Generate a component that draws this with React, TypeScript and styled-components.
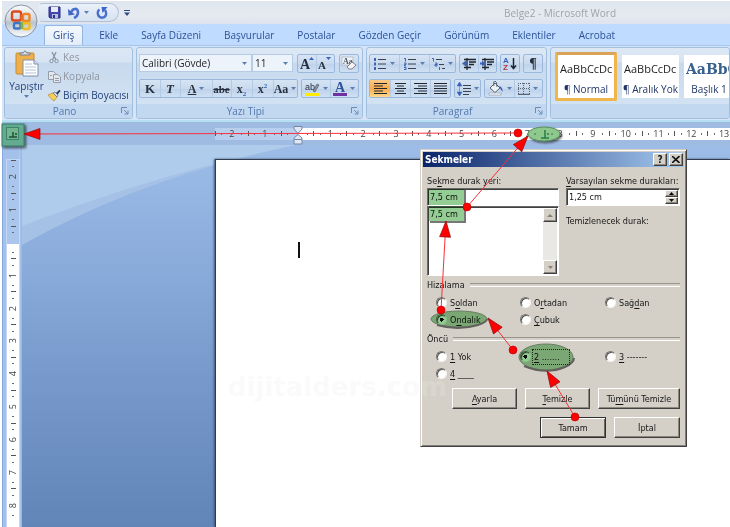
import React from "react";
import styled, { createGlobalStyle, css } from "styled-components";

const GlobalStyle = createGlobalStyle`
  * { box-sizing: border-box; }
  body { margin: 0; background: #fff; overflow: hidden; }
  button, input { font: inherit; color: inherit; }
`;

const ribbonFont = `"Open Sans", "Noto Sans", sans-serif`;
const dialogFont = `"DejaVu Sans Condensed", "DejaVu Sans", sans-serif`;

const Screen = styled.div`
  position: relative;
  display: flex;
  flex-direction: column;
  height: 100vh;
  padding: 1px 0 0 2px;
  overflow: hidden;
  font: 10px/14px ${ribbonFont};
  color: #2a4a86;
`;

/* ---------- window frame ---------- */

const TitleBar = styled.header`
  display: flex;
  align-items: center;
  height: 23px;
  flex: none;
  padding: 0 114px 0 37px;
  background: linear-gradient(#dfe6ee, #e6eaf0 60%, #dde4ee);
`;

const QuickAccess = styled.div`
  display: flex;
  align-items: center;
  gap: 7px;
  width: 80px;
  height: 19px;
  padding: 0 4px 0 8px;
  border: 1px solid #b3c2d6;
  border-left-color: transparent;
  border-radius: 4px 10px 10px 4px;
  background: linear-gradient(#e9f0f8, #d7e3f2);
`;

const PlainButton = styled.button`
  display: flex;
  align-items: center;
  justify-content: center;
  gap: 4px;
  padding: 0;
  border: 0;
  background: none;
  line-height: 12px;
`;

const CustomizeButton = styled(PlainButton)`
  width: 15px;
`;

const WindowTitle = styled.h1`
  margin: 0 0 0 auto;
  font: 10px/14px ${ribbonFont};
  color: #9fa3a9;
`;

const OfficeButton = styled.button`
  position: absolute;
  left: 4px;
  top: 4px;
  width: 34px;
  height: 34px;
  padding: 0;
  border: 0;
  background: none;
`;

const Tabs = styled.nav`
  display: flex;
  flex: none;
  align-items: flex-end;
  height: 22px;
  padding-left: 42px;
  background: #bfdbff;
  border-bottom: 1px solid #a9c6ea;
`;

const Tab = styled.button<{ $active?: boolean }>`
  flex: none;
  height: 20px;
  padding: 0 10px 2px 11px;
  border: 1px solid transparent;
  border-bottom: 0;
  border-radius: 3px 3px 0 0;
  background: none;
  color: #2c5196;
  white-space: nowrap;
  ${(p) =>
    p.$active &&
    css`
      padding: 0 8px 2px;
      margin-right: 4px;
      border-color: #93b5df;
      background: linear-gradient(#f4f8fd, #e2ecf8);
    `}
`;

/* ---------- ribbon ---------- */

const Ribbon = styled.section`
  display: flex;
  flex: none;
  gap: 3px;
  height: 76px;
  padding: 1px 0 1px 2px;
  background: #d5e5f7;
  border-bottom: 2px solid #b5e0f2;
`;

const Group = styled.section<{ $width?: number }>`
  display: flex;
  flex-direction: column;
  flex: ${(p) => (p.$width ? `none` : `1 0 180px`)};
  width: ${(p) => (p.$width ? `${p.$width}px` : `auto`)};
  border: 1px solid #a3bfde;
  border-radius: 3px;
  overflow: hidden;
  background: linear-gradient(#dde8f5 0, #d6e3f3 14px, #c7d9ed 15px, #d5e5f5 100%);
`;

const GroupBody = styled.div`
  display: flex;
  flex: 1;
`;

const GroupLabel = styled.footer`
  display: flex;
  align-items: center;
  height: 14px;
  padding: 0 3px;
  background: #c1d8f0;
  color: #5577ae;
  svg { flex: none; }
  span { flex: 1; text-align: center; }
`;

const PasteButton = styled(PlainButton)`
  flex-direction: column;
  justify-content: flex-start;
  gap: 3px;
  width: 43px;
  padding: 2px 0 0;
  color: #24427c;
`;

const Commands = styled.div`
  display: flex;
  flex-direction: column;
  justify-content: center;
  gap: 5px;
`;

const Command = styled.button<{ $dim?: boolean }>`
  display: flex;
  align-items: center;
  gap: 2px;
  height: 14px;
  padding: 0;
  border: 0;
  background: none;
  white-space: nowrap;
  color: ${(p) => (p.$dim ? "#8f959f" : "#24427c")};
`;

const ToolRows = styled.div`
  display: flex;
  flex-direction: column;
  gap: 6px;
  flex: 1;
  padding: 6px 3px 0 2px;
`;

const ToolRow = styled.div`
  display: flex;
  justify-content: space-between;
  height: 19px;
`;

const ToolSet = styled.div`
  display: flex;
  border: 1px solid #9bb8dc;
  border-radius: 2px;
  background: linear-gradient(#d6e4f4 0, #c9daee 50%, #bdd1ea 51%, #cfe0f3);
`;

const Tool = styled.button<{ $w: number; $on?: boolean }>`
  display: flex;
  align-items: center;
  justify-content: center;
  gap: 3px;
  width: ${(p) => p.$w}px;
  padding: 0;
  border: 0;
  background: ${(p) => (p.$on ? "linear-gradient(#fbc988, #fcab4a 50%, #fdd98c)" : "none")};
  & + & { box-shadow: inset 1px 0 #b3cae6; }
`;

const Combo = styled.label<{ $w: number }>`
  display: flex;
  align-items: center;
  width: ${(p) => p.$w}px;
  height: 18px;
  padding: 0 4px 0 2px;
  border: 1px solid #b5cbe6;
  background: #edf3fa;
  color: #1d1d1d;
  input {
    flex: 1;
    min-width: 0;
    padding: 0;
    border: 0;
    background: none;
    outline: 0;
  }
`;

const Combos = styled.div`
  display: flex;
`;

const Gallery = styled.div`
  display: flex;
  align-items: flex-start;
  gap: 5px;
  padding: 4px 0 0 4px;
`;

const StyleCard = styled.button<{ $active?: boolean; $w: number }>`
  display: flex;
  flex: none;
  flex-direction: column;
  align-items: center;
  justify-content: space-between;
  width: ${(p) => p.$w}px;
  height: 43px;
  margin-top: 3px;
  padding: 7px 2px 2px;
  border: 0;
  overflow: hidden;
  background: #fff;
  color: #1e3566;
  white-space: nowrap;
  ${(p) =>
    p.$active &&
    css`
      height: 49px;
      margin-top: 0;
      padding-top: 7px;
      border: 3px solid #f0b64b;
      border-top-color: #d9a35a;
      border-radius: 2px;
    `}
`;

const Sample = styled.span<{ $heading?: boolean }>`
  width: 100%;
  overflow: hidden;
  text-align: left;
  font-size: 11px;
  color: #1d1d1d;
  ${(p) =>
    p.$heading &&
    css`
      font: bold 14px/14px "DejaVu Serif", serif;
      color: #38618f;
    `}
`;

/* ---------- rulers and document ---------- */

const RulerBar = styled.div`
  display: flex;
  flex: none;
  align-items: center;
  height: 23px;
  padding-left: 213px;
  background: #9fbbe2;
`;

const Strip = styled.div`
  display: flex;
  flex: 1;
  height: 12px;
  min-width: 0;
  overflow: hidden;
  background: linear-gradient(90deg, #b9cfee 83px, #fff 83px);
`;

const Scale = styled.div`
  display: grid;
  flex: none;
  grid-template-columns: repeat(16, 1fr);
  width: 525px;
  align-items: center;
`;

const Centimetre = styled.div`
  display: grid;
  grid-template-columns: 1px 1fr 8px 1fr;
  justify-items: center;
  align-items: center;
  font: 9px/12px ${ribbonFont};
  color: #444;
`;

const Tick = styled.i`
  width: 1px;
  height: 5px;
  background: #555;
`;

const Dot = styled.i`
  width: 1px;
  height: 2px;
  background: #667;
`;

const Workspace = styled.main`
  display: flex;
  flex: 1;
  min-height: 0;
  background: #9dbbe4;
`;

const SideRuler = styled.div`
  flex: none;
  width: 20px;
  padding: 15px 4px 0;
  border-left: 1px solid #86aae0;
  background: linear-gradient(90deg, #a3c1ea 15px, #a9c7ef 17px, #95b4e0);
`;

const SideStrip = styled.div`
  display: flex;
  width: 12px;
  height: 100%;
  overflow: hidden;
  outline: 1px solid #c3d8f4;
  background: linear-gradient(#abc6ec 84px, #fff 84px);
`;

const SideScale = styled.div`
  display: grid;
  flex: none;
  grid-template-rows: repeat(11, 1fr);
  width: 12px;
  height: 361px;
`;

const SideCentimetre = styled.div`
  display: grid;
  grid-template-rows: 1px 1fr 8px 1fr;
  justify-items: center;
  align-items: center;
  font: 9px/12px ${ribbonFont};
  color: #444;
  span { writing-mode: vertical-rl; transform: rotate(180deg); }
  ${Tick} { width: 5px; height: 1px; }
  ${Dot} { width: 2px; height: 1px; }
`;

const Desk = styled.div`
  position: relative;
  display: flex;
  flex: 1;
  padding: 14px 0 0 193px;
  background: linear-gradient(#9dbde8, #86a8d8 38%, #7698ca 62%, #6285b8);
`;

const Swoosh = styled.svg`
  position: absolute;
  left: 0;
  top: 0;
`;

const Paper = styled.article`
  position: relative;
  flex: 1;
  padding: 82px 0 0 82px;
  border: solid #333c4c;
  border-width: 1px 0 0 1px;
  background: #fff;
  box-shadow: -1px 0 2px #3d5275;
`;

const Caret = styled.div`
  width: 2px;
  height: 16px;
  background: #111;
`;

const Watermark = styled.div`
  position: absolute;
  left: 228px;
  top: 372px;
  font: bold 26px/30px "DejaVu Sans", sans-serif;
  color: rgba(236, 236, 236, 0.24);
  pointer-events: none;
`;

/* ---------- dialog ---------- */

const Dialog = styled.section`
  position: absolute;
  left: 420px;
  top: 149px;
  width: 267px;
  padding: 2px 2px 4px;
  border: 1px solid #d4d0c8;
  border-right-color: #404040;
  border-bottom-color: #404040;
  box-shadow: inset 1px 1px #fff, inset -1px -1px #808080;
  background: #d4d0c8;
  font: 9px/14px ${dialogFont};
  color: #161616;
  u { text-underline-offset: 2px; }
`;

const DialogTitle = styled.header`
  display: flex;
  align-items: center;
  gap: 2px;
  height: 15px;
  padding: 0 1px 0 2px;
  background: linear-gradient(90deg, #0a246a, #a6caf0);
  h2 {
    flex: 1;
    margin: 0;
    font: bold 10px/14px ${dialogFont};
    color: #fff;
  }
`;

const raised = css`
  border: 1px solid;
  border-color: #fff #404040 #404040 #fff;
  box-shadow: inset -1px -1px #8c8880;
  background: #d4d0c8;
`;

const CaptionButton = styled.button`
  ${raised}
  display: flex;
  align-items: center;
  justify-content: center;
  width: 14px;
  height: 13px;
  padding: 0;
  font: bold 10px/10px ${dialogFont};
`;

const DialogBody = styled.form`
  padding: 7px 4px 0;
`;

const Fields = styled.div`
  display: grid;
  grid-template-columns: 132px minmax(0, 1fr);
  column-gap: 7px;
  height: 102px;
  align-content: start;
  white-space: nowrap;
`;

const Column = styled.div`
  display: flex;
  flex-direction: column;
`;

const sunken = css`
  border: 1px solid;
  border-color: #6c6a66 #fff #fff #6c6a66;
  box-shadow: inset 1px 1px #404040;
  background: #fff;
`;

const TextBox = styled.input`
  ${sunken}
  width: 100%;
  height: 18px;
  padding: 0 0 0 2px;
`;

const Spinner = styled.div`
  ${sunken}
  display: flex;
  height: 18px;
  padding: 1px;
  input { flex: 1; min-width: 0; padding: 0 0 0 1px; border: 0; outline: 0; background: none; }
`;

const SpinButtons = styled.div`
  display: grid;
  grid-template-rows: 1fr 1fr;
  width: 13px;
`;

const SmallButton = styled.button`
  ${raised}
  display: flex;
  align-items: center;
  justify-content: center;
  min-height: 0;
  padding: 0;
`;

const ListBox = styled.div`
  ${sunken}
  display: flex;
  height: 70px;
  padding: 1px 1px 1px 0;
`;

const Items = styled.ul`
  flex: 1;
  margin: 0;
  padding: 0 0 0 2px;
  list-style: none;
  line-height: 12px;
`;

const ScrollBar = styled.div`
  display: flex;
  flex-direction: column;
  justify-content: space-between;
  width: 14px;
  background: #eae8e4;
  ${SmallButton} { height: 14px; }
`;

const Note = styled.p`
  margin: 8px 0 0;
`;

const Fieldset = styled.fieldset`
  margin: 2px 0 0;
  padding: 3px 0 3px 9px;
  border: 0;
`;

const Options = styled.div`
  display: grid;
  grid-template-columns: 84px 85px 1fr;
  row-gap: 2px;
`;

const Legend = styled.legend`
  display: flex;
  align-items: center;
  gap: 5px;
  width: calc(100% + 9px);
  margin: 0 0 0 -9px;
  padding: 0;
  &::after {
    content: "";
    flex: 1;
    height: 2px;
    border-top: 1px solid #98958e;
    border-bottom: 1px solid #fff;
  }
`;

const Option = styled.label`
  display: flex;
  align-items: center;
  gap: 2px;
  height: 15px;
  white-space: nowrap;
`;

const Radio = styled.input`
  appearance: none;
  flex: none;
  width: 11px;
  height: 11px;
  margin: 0;
  border: 1px solid;
  border-color: #77746e #f4f3f0 #f4f3f0 #77746e;
  border-radius: 50%;
  background: #fff;
  box-shadow: inset 1px 1px #555;
  &:checked { background: radial-gradient(circle, #111 2px, #fff 2px); }
`;

const OptionText = styled.span<{ $focus?: boolean }>`
  padding: 0 1px;
  ${(p) =>
    p.$focus &&
    css`
      width: 36px;
      outline: 1px dotted #333;
    `}
`;

const Actions = styled.div`
  display: flex;
  justify-content: flex-end;
  gap: 8px;
  padding: 4px 0;
`;

const PushButton = styled.button<{ $w: number; $primary?: boolean }>`
  ${raised}
  width: ${(p) => p.$w}px;
  height: 21px;
  padding: 0;
  white-space: nowrap;
  ${(p) =>
    p.$primary &&
    css`
      border-color: #303030;
      box-shadow: inset 1px 1px #fff, inset -1px -1px #6a675f;
    `}
`;

const Annotations = styled.svg`
  position: absolute;
  left: 0;
  top: 0;
  pointer-events: none;
`;

const Highlights = styled.g`
  mix-blend-mode: multiply;
`;

/* ---------- icons ---------- */

const Chevron = ({ fill = "#5b7fb5" }: { fill?: string }) => (
  <svg width="5" height="3" viewBox="0 0 5 3"><path d="M0 0H5L2.5 3Z" fill={fill} /></svg>
);

const Launcher = () => (
  <svg width="8" height="8" viewBox="0 0 8 8" fill="none" stroke="#6b89b5">
    <path d="M.5 6V.5H6M3 3L6.500 6.500M7 3.500V7H3.500" />
  </svg>
);

const OfficeLogo = () => (
  <svg width="34" height="34" viewBox="0 0 34 34">
    <defs>
      <linearGradient id="orb" x1="0" y1="0" x2="0" y2="1">
        <stop offset="0" stopColor="#fafbfc" />
        <stop offset=".45" stopColor="#d3d8de" />
        <stop offset=".55" stopColor="#b9c2cd" />
        <stop offset="1" stopColor="#fdfefe" />
      </linearGradient>
    </defs>
    <circle cx="17" cy="17" r="16" fill="url(#orb)" stroke="#8694a8" />
    <g fill="none" strokeWidth="2.400">
      <rect x="8" y="7.500" width="9" height="9" rx="2" stroke="#dd4a1c" />
      <rect x="19" y="10" width="6.500" height="7" rx="1.500" stroke="#ee8428" />
      <rect x="10" y="19" width="6.500" height="5.500" rx="1.500" stroke="#3c77c4" />
      <rect x="19" y="19" width="6.500" height="6" rx="1.500" stroke="#f0bb1f" />
      <path d="M17.700 11V16" stroke="#ea6a20" />
      <path d="M17.700 18V25" stroke="#7fb43c" />
    </g>
  </svg>
);

const SaveIcon = () => (
  <svg width="13" height="13" viewBox="0 0 13 13">
    <path d="M1 1H12V12H2L1 11Z" fill="#4447a8" stroke="#2c2f86" />
    <rect x="3" y="1" width="7" height="5" fill="#e8ecfa" />
    <rect x="4" y="8" width="6" height="4" fill="#b8bde4" />
    <rect x="5" y="9" width="2" height="3" fill="#2c2f86" />
  </svg>
);

const UndoIcon = () => (
  <svg width="12" height="12" viewBox="0 0 12 12" fill="none">
    <path d="M3.500 5C4.500 1 10 .8 10 5C10 8 8.500 10 6 11" stroke="#4a70cc" strokeWidth="2.600" />
    <path d="M0 2L.5 8.500L7 7.500Z" fill="#3f66c6" />
  </svg>
);

const RedoIcon = () => (
  <svg width="12" height="12" viewBox="0 0 12 12" fill="none">
    <path d="M3.500 2.500C.8 4 1 10.500 6 10.700C10.500 10.500 11 6 9 3" stroke="#4a70cc" strokeWidth="2.400" />
    <path d="M5.500 0H11.500L6.500 6Z" fill="#3f66c6" />
  </svg>
);

const PasteIcon = () => (
  <svg width="24" height="27" viewBox="0 0 24 27">
    <rect x="1" y="3" width="18" height="21" rx="1" fill="#eeb04c" stroke="#c98a2d" />
    <path d="M5 5V3H8Q10 -1 12 3H15V5Z" fill="#d8dce2" stroke="#777f8b" />
    <path d="M8 10H19L23 14V26H8Z" fill="#fff" stroke="#7c8fae" />
    <path d="M19 10V14H23" fill="#dbe6f4" stroke="#7c8fae" />
    <path d="M10 14H17M10 17H21M10 20H21M10 23H21" stroke="#b3c3da" />
  </svg>
);

const CutIcon = () => (
  <svg width="13" height="13" viewBox="0 0 13 13" fill="none" stroke="#8b93a0">
    <path d="M4 1L8 9M8 1L4.500 9" strokeWidth="1.300" />
    <circle cx="3.500" cy="10" r="1.700" /><circle cx="8.500" cy="10" r="1.700" />
  </svg>
);

const CopyIcon = () => (
  <svg width="13" height="13" viewBox="0 0 13 13" fill="#e4e7ec" stroke="#959daa">
    <path d="M.5 1.500H5.500L7.500 3.500V9.500H.5Z" />
    <path d="M5.500 4.500H10L12.500 7V12.500H5.500Z" /><path d="M7 8.500H11M7 10.500H11M2 5.500H4" />
  </svg>
);

const BrushIcon = () => (
  <svg width="13" height="13" viewBox="0 0 13 13">
    <path d="M0 6L5 4L9 8L6 12Q3 10 0 6Z" fill="#f5cf58" stroke="#b88a2a" strokeWidth=".7" />
    <path d="M5 4L7 3L10 6L9 8Z" fill="#dbe1ea" stroke="#5b6472" strokeWidth=".7" />
    <path d="M8 4L11.500 .8L12.500 2L9.500 5.500Z" fill="#27365e" />
  </svg>
);

const Letter = styled.span<{ $size?: number; $italic?: boolean; $line?: string }>`
  font: 700 ${(p) => p.$size ?? 12}px/14px "Liberation Serif", serif;
  font-style: ${(p) => (p.$italic ? "italic" : "normal")};
  text-decoration: ${(p) => p.$line ?? "none"};
  color: #27303f;
  sub, sup { font-size: 7px; line-height: 0; color: #3a62b8; }
`;

const SizeIcon = ({ up }: { up: boolean }) => (
  <svg width="14" height="15" viewBox="0 0 14 15">
    <text x="0" y="13" fontFamily="Liberation Serif" fontWeight="bold" fontSize={up ? 14 : 11} fill="#27303f">A</text>
    <path d={up ? "M9 4H14L11.500 1Z" : "M8 1H13L10.500 4Z"} fill="#3a62b8" />
  </svg>
);

const ClearIcon = () => (
  <svg width="16" height="15" viewBox="0 0 16 15">
    <rect x="1" y="1" width="11" height="8" fill="#eef1f6" stroke="#a3abb8" strokeWidth=".6" />
    <text x="2" y="8" fontFamily="Liberation Serif" fontWeight="bold" fontSize="8" fill="#4a5262">Aa</text>
    <path d="M6 11L11 6L15 9L11 13Q7 14 6 11Z" fill="#f6f2f4" stroke="#80808c" />
  </svg>
);

const HighlightIcon = () => (
  <svg width="15" height="15" viewBox="0 0 15 15">
    <text x="0" y="9" fontFamily="Liberation Sans" fontSize="9" fill="#27303f">ab</text>
    <path d="M8 10L12 3L14 4L10 11Z" fill="#8d939c" stroke="#4a5262" strokeWidth=".6" />
    <rect x="0" y="12" width="14" height="3" fill="#ffec00" />
  </svg>
);

const FontColorIcon = () => (
  <svg width="14" height="15" viewBox="0 0 14 15">
    <text x="2" y="11" fontFamily="Liberation Serif" fontWeight="bold" fontSize="14" fill="#31539c">A</text>
    <rect x="0" y="12" width="14" height="3" fill="#7030a0" />
  </svg>
);

const ListIcon = ({ kind }: { kind: "bullet" | "number" | "tree" }) => (
  <svg width="13" height="12" viewBox="0 0 13 12">
    {kind === "tree" ? (
      <path d="M4 1.500H10M7 6.500H12M10 10.500H13" stroke="#3b424e" />
    ) : (
      <path d="M4 1.500H12M4 6H12M4 10.500H12" stroke="#3b424e" />
    )}
    {kind === "bullet" && <path d="M0 0H2V3H0ZM0 4.500H2V7.500H0ZM0 9H2V12H0Z" fill="#3b62b4" />}
    {kind === "number" && <path d="M0 .5H1.500V3.500M0 5H2V6.500H.5V8H2M0 9.500H2V11.500H0" fill="none" stroke="#3b62b4" />}
    {kind === "tree" && <path d="M0 .5H1.500V3.500M3 5H5V8H3V6.500H5M7.500 9V12" fill="none" stroke="#3b62b4" />}
  </svg>
);

const IndentIcon = ({ flip }: { flip?: boolean }) => (
  <svg width="14" height="12" viewBox="0 0 14 12">
    <path d="M2 1.500H14M7 4H14M7 6.500H12M2 9.500H9M5 0V12" stroke="#20262f" strokeWidth="1.300" />
    <path d={flip ? "M0 4.500H2V2.500L6 5.500L2 8.500V6.500H0Z" : "M6 4.500H4V2.500L0 5.500L4 8.500V6.500H6Z"} fill="#3b62b4" />
  </svg>
);

const SortIcon = () => (
  <svg width="14" height="15" viewBox="0 0 14 15">
    <text x="0" y="7" fontFamily="Liberation Sans" fontWeight="bold" fontSize="8" fill="#3b62b4">A</text>
    <text x="0" y="14" fontFamily="Liberation Sans" fontWeight="bold" fontSize="8" fill="#b8333d">Z</text>
    <path d="M10.500 2V12M8 9.500L10.500 12.500L13 9.500" fill="none" stroke="#20262f" strokeWidth="1.500" />
  </svg>
);

const AlignIcon = ({ d }: { d: string }) => (
  <svg width="13" height="11" viewBox="0 0 13 11"><path d={d} stroke="#20262f" /></svg>
);

const SpacingIcon = () => (
  <svg width="14" height="14" viewBox="0 0 14 14">
    <path d="M6 3.500H14M6 6.500H14M6 9.500H14M6 12.500H12" stroke="#3b424e" />
    <path d="M2.500 3V11M0 4L2.500 0L5 4ZM0 10L2.500 14L5 10Z" fill="#3b62b4" stroke="#3b62b4" strokeWidth=".5" />
  </svg>
);

const BucketIcon = () => (
  <svg width="16" height="15" viewBox="0 0 16 15">
    <path d="M2 7L7 2L12 7L7 11.500Z" fill="#eef2f7" stroke="#59616e" />
    <path d="M6 5Q5 0 7 0Q9 0 9 6" fill="none" stroke="#59616e" />
    <path d="M11 5Q15 6 14.500 11L12.500 8Z" fill="#3b62b4" />
    <rect x="1" y="12" width="12" height="2" fill="#f7f9fb" stroke="#8b97a8" strokeWidth=".6" />
  </svg>
);

const BordersIcon = () => (
  <svg width="12" height="12" viewBox="0 0 12 12" fill="none" stroke="#5a6472">
    <path d="M.5 0V11M5.500 0V11M11.500 0V11M0 .5H12M0 5.500H12" strokeDasharray="1 1" />
    <path d="M0 11.500H12" strokeWidth="1.500" />
  </svg>
);

const alignments = [
  "M0 .5H13M0 3H9M0 5.500H13M0 8H9M0 10.500H13",
  "M1 .5H12M3 3H10M1 5.500H12M3 8H10M1 10.500H12",
  "M0 .5H13M4 3H13M0 5.500H13M4 8H13M0 10.500H13",
  "M0 .5H13M0 3H13M0 5.500H13M0 8H13M0 10.500H13",
];

const IndentMarker = styled.svg`
  position: absolute;
  left: 293px;
  top: 126px;
`;

const tabNames = ["Ekle", "Sayfa Düzeni", "Başvurular", "Postalar", "Gözden Geçir", "Görünüm", "Eklentiler", "Acrobat"];
const marks = [2, 1, null, 1, 2, 3, 4, 5, 6, 7, 8, 9, 10, 11, 12, 13];

/** Draws a red pointer with a round tail at (x1, y1) and its tip at (x2, y2). */
const Pointer = ({ x1, y1, x2, y2 }: { x1: number; y1: number; x2: number; y2: number }) => {
  const angle = (Math.atan2(y2 - y1, x2 - x1) * 180) / Math.PI;
  return (
    <g>
      <line x1={x1} y1={y1} x2={x2} y2={y2} stroke="#f8303a" />
      <circle cx={x1} cy={y1} r="4" fill="#f00" stroke="#b00008" strokeWidth=".6" />
      <path d="M0 0L-16 5.500V-5.500Z" transform={`translate(${x2} ${y2}) rotate(${angle})`} fill="#f00" stroke="#8c1010" strokeWidth=".7" />
    </g>
  );
};

const Choice = ({ group, checked, children }: { group: string; checked?: boolean; children: React.ReactNode }) => (
  <Option>
    <Radio type="radio" name={group} defaultChecked={checked} />
    <OptionText $focus={checked && group === "leader"}>{children}</OptionText>
  </Option>
);

export default function App() {
  return (
    <Screen>
      <GlobalStyle />
      <TitleBar>
        <QuickAccess>
          <PlainButton aria-label="Kaydet"><SaveIcon /></PlainButton>
          <PlainButton aria-label="Geri Al"><UndoIcon /><Chevron /></PlainButton>
          <PlainButton aria-label="Yinele"><RedoIcon /></PlainButton>
        </QuickAccess>
        <CustomizeButton aria-label="Özelleştir">
          <svg width="6" height="6" viewBox="0 0 6 6" fill="#2d4a85"><path d="M0 0H6V1H0ZM0 2.500H6L3 6Z" /></svg>
        </CustomizeButton>
        <WindowTitle>Belge2 - Microsoft Word</WindowTitle>
      </TitleBar>
      <Tabs>
        <Tab $active>Giriş</Tab>
        {tabNames.map((name) => <Tab key={name}>{name}</Tab>)}
      </Tabs>
      <OfficeButton aria-label="Office"><OfficeLogo /></OfficeButton>

      <Ribbon>
        <Group $width={129}>
          <GroupBody>
            <PasteButton><PasteIcon />Yapıştır<Chevron /></PasteButton>
            <Commands>
              <Command $dim><CutIcon />Kes</Command>
              <Command $dim><CopyIcon />Kopyala</Command>
              <Command><BrushIcon />Biçim Boyacısı</Command>
            </Commands>
          </GroupBody>
          <GroupLabel><span>Pano</span><Launcher /></GroupLabel>
        </Group>

        <Group $width={227}>
          <GroupBody>
            <ToolRows>
              <ToolRow>
                <Combos>
                  <Combo $w={113}><input aria-label="Yazı Tipi" defaultValue="Calibri (Gövde)" /><Chevron /></Combo>
                  <Combo $w={41}><input aria-label="Boyut" defaultValue="11" /><Chevron /></Combo>
                </Combos>
                <ToolSet>
                  <Tool $w={18} aria-label="Büyüt"><SizeIcon up /></Tool>
                  <Tool $w={18} aria-label="Küçült"><SizeIcon up={false} /></Tool>
                </ToolSet>
                <ToolSet><Tool $w={18} aria-label="Temizle"><ClearIcon /></Tool></ToolSet>
              </ToolRow>
              <ToolRow>
                <ToolSet>
                  <Tool $w={20}><Letter $size={13}>K</Letter></Tool>
                  <Tool $w={20}><Letter $size={13} $italic>T</Letter></Tool>
                  <Tool $w={32}><Letter $line="underline">A</Letter><Chevron /></Tool>
                  <Tool $w={19}><Letter $size={11} $line="line-through">abe</Letter></Tool>
                  <Tool $w={21}><Letter>x<sub>2</sub></Letter></Tool>
                  <Tool $w={21}><Letter>x<sup>2</sup></Letter></Tool>
                  <Tool $w={24}><Letter $size={12}>Aa</Letter><Chevron /></Tool>
                </ToolSet>
                <ToolSet>
                  <Tool $w={28} aria-label="Vurgu"><HighlightIcon /><Chevron /></Tool>
                  <Tool $w={28} aria-label="Renk"><FontColorIcon /><Chevron /></Tool>
                </ToolSet>
              </ToolRow>
            </ToolRows>
          </GroupBody>
          <GroupLabel><span>Yazı Tipi</span><Launcher /></GroupLabel>
        </Group>

        <Group $width={181}>
          <GroupBody>
            <ToolRows>
              <ToolRow>
                <ToolSet>
                  <Tool $w={29} aria-label="Madde"><ListIcon kind="bullet" /><Chevron /></Tool>
                  <Tool $w={30} aria-label="Numara"><ListIcon kind="number" /><Chevron /></Tool>
                  <Tool $w={26} aria-label="Düzey"><ListIcon kind="tree" /><Chevron /></Tool>
                </ToolSet>
                <ToolSet>
                  <Tool $w={18} aria-label="Girintiyi Azalt"><IndentIcon /></Tool>
                  <Tool $w={18} aria-label="Girintiyi Artır"><IndentIcon flip /></Tool>
                </ToolSet>
                <ToolSet><Tool $w={18} aria-label="Sırala"><SortIcon /></Tool></ToolSet>
                <ToolSet><Tool $w={18}><Letter $size={14}>¶</Letter></Tool></ToolSet>
              </ToolRow>
              <ToolRow>
                <ToolSet>
                  {alignments.map((d, i) => (
                    <Tool key={d} $w={20} $on={i === 0} aria-label={`Hizala ${i + 1}`}><AlignIcon d={d} /></Tool>
                  ))}
                </ToolSet>
                <ToolSet><Tool $w={25} aria-label="Aralık"><SpacingIcon /><Chevron /></Tool></ToolSet>
                <ToolSet>
                  <Tool $w={29} aria-label="Gölgelendirme"><BucketIcon /><Chevron /></Tool>
                  <Tool $w={28} aria-label="Kenarlık"><BordersIcon /><Chevron /></Tool>
                </ToolSet>
              </ToolRow>
            </ToolRows>
          </GroupBody>
          <GroupLabel><span>Paragraf</span><Launcher /></GroupLabel>
        </Group>

        <Group>
          <GroupBody>
            <Gallery>
              <StyleCard $active $w={62}><Sample>AaBbCcDc</Sample>¶ Normal</StyleCard>
              <StyleCard $w={57}><Sample>AaBbCcDc</Sample>¶ Aralık Yok</StyleCard>
              <StyleCard $w={50}><Sample $heading>AaBbC</Sample>Başlık 1</StyleCard>
            </Gallery>
          </GroupBody>
          <GroupLabel />
        </Group>
      </Ribbon>

      <RulerBar>
        <Strip>
          <Scale>
            {marks.map((n, i) => (
              <Centimetre key={i}><Tick /><Dot /><span>{n}</span><Dot /></Centimetre>
            ))}
          </Scale>
        </Strip>
      </RulerBar>

      <Workspace>
        <SideRuler>
          <SideStrip>
            <SideScale>
              {marks.slice(0, 11).map((n, i) => (
                <SideCentimetre key={i}><Tick /><Dot /><span>{n}</span><Dot /></SideCentimetre>
              ))}
            </SideScale>
          </SideStrip>
        </SideRuler>
        <Desk>
          <Swoosh width="320" height="110" viewBox="0 0 320 110">
            <path d="M0 0H275Q120 32 0 100Z" fill="#a5c1e6" />
            <path d="M0 0H273Q130 30 0 81Z" fill="#b0ccec" />
          </Swoosh>
          <Paper><Caret /></Paper>
        </Desk>
      </Workspace>

      <IndentMarker width="10" height="19" viewBox="0 0 10 19" fill="#dfe8f4" stroke="#7287a8">
        <path d="M1 .5H9V3L5 7.500L1 3Z" />
        <path d="M5 8.500L9 12V13.500H1V12Z" />
        <path d="M1 13.500H9V18H1Z" />
      </IndentMarker>

      <Dialog role="dialog" aria-label="Sekmeler">
        <DialogTitle>
          <h2>Sekmeler</h2>
          <CaptionButton>?</CaptionButton>
          <CaptionButton aria-label="Kapat">
            <svg width="8" height="7" viewBox="0 0 8 7"><path d="M0 0L7.500 7M7.500 0L0 7" stroke="#111" strokeWidth="1.600" /></svg>
          </CaptionButton>
        </DialogTitle>
        <DialogBody onSubmit={(e) => e.preventDefault()}>
          <Fields>
            <Column>
              <label htmlFor="stop">Se<u>k</u>me durak yeri:</label>
              <TextBox id="stop" defaultValue="7,5 cm" />
              <ListBox>
                <Items><li>7,5 cm</li></Items>
                <ScrollBar>
                  <SmallButton type="button" aria-label="Yukarı"><svg width="6" height="3" viewBox="0 0 6 3"><path d="M0 3H6L3 0Z" fill="#858279" /></svg></SmallButton>
                  <SmallButton type="button" aria-label="Aşağı"><Chevron fill="#858279" /></SmallButton>
                </ScrollBar>
              </ListBox>
            </Column>
            <Column>
              <label htmlFor="default"><u>V</u>arsayılan sekme durakları:</label>
              <Spinner>
                <input id="default" defaultValue="1,25 cm" />
                <SpinButtons>
                  <SmallButton type="button" aria-label="Artır"><svg width="5" height="3" viewBox="0 0 5 3"><path d="M0 3H5L2.500 0Z" /></svg></SmallButton>
                  <SmallButton type="button" aria-label="Azalt"><Chevron fill="#111" /></SmallButton>
                </SpinButtons>
              </Spinner>
              <Note>Temizlenecek durak:</Note>
            </Column>
          </Fields>
          <Fieldset>
            <Legend>Hizalama</Legend>
            <Options>
              <Choice group="align">S<u>o</u>ldan</Choice>
              <Choice group="align">O<u>r</u>tadan</Choice>
              <Choice group="align">Sağ<u>d</u>an</Choice>
              <Choice group="align" checked>O<u>n</u>dalık</Choice>
              <Choice group="align"><u>Ç</u>ubuk</Choice>
            </Options>
          </Fieldset>
          <Fieldset>
            <Legend>Öncü</Legend>
            <Options>
              <Choice group="leader"><u>1</u> Yok</Choice>
              <Choice group="leader" checked><u>2</u> .......</Choice>
              <Choice group="leader"><u>3</u> -------</Choice>
              <Choice group="leader"><u>4</u> ____</Choice>
            </Options>
          </Fieldset>
          <Actions>
            <PushButton type="button" $w={65}><u>A</u>yarla</PushButton>
            <PushButton type="button" $w={65}><u>T</u>emizle</PushButton>
            <PushButton type="button" $w={82}>Tü<u>m</u>ünü Temizle</PushButton>
          </Actions>
          <Actions>
            <PushButton $primary $w={66}>Tamam</PushButton>
            <PushButton type="button" $w={66}>İptal</PushButton>
          </Actions>
        </DialogBody>
      </Dialog>

      <Watermark>dijitalders.com</Watermark>

      <Annotations width="730" height="527" viewBox="0 0 730 527">
        <defs>
          <filter id="drop" x="-20%" y="-20%" width="150%" height="160%">
            <feDropShadow dx="1.500" dy="1.500" stdDeviation="1" floodColor="#111" floodOpacity=".7" />
          </filter>
        </defs>
        <g filter="url(#drop)">
          <rect x="2" y="124" width="22" height="22" fill="#62ab91" stroke="#387a66" />
          <ellipse cx="544" cy="134" rx="16" ry="7" fill="#8dc98d" stroke="#5a8f5e" />
        </g>
        <rect x="6.500" y="127.500" width="12" height="12" fill="#74b58d" stroke="#3d846a" />
        <path d="M9 137H17M13 132V137M15 134H17" stroke="#1d5138" strokeWidth="1.500" />
        <path d="M541 138H549M545 130V138M547 134H549" stroke="#2c7a45" strokeWidth="1.500" />
        <path d="M535 133V135M552 133V135" stroke="#4a6a4e" />
        <Highlights>
          <rect x="428" y="189" width="36" height="16" fill="#93cd93" />
          <rect x="429" y="206" width="35" height="15" fill="#93cd93" />
          <ellipse cx="459" cy="319" rx="28" ry="8" fill="#93cd93" stroke="#799979" />
          <ellipse cx="546" cy="357" rx="27" ry="13" fill="#93cd93" stroke="#799979" />
          <g fill="none" stroke="#777" strokeWidth="2">
            <path d="M465 190V222H430" />
            <path d="M437 325Q458 331 478 325Q487 322 487 319" />
            <path d="M524 366Q546 375 565 367Q574 363 574 358" />
          </g>
        </Highlights>
        <Pointer x1={518} y1={133} x2={24} y2={134} />
        <Pointer x1={467} y1={207} x2={528} y2={136} />
        <Pointer x1={441} y1={310} x2={446} y2={221} />
        <Pointer x1={513} y1={350} x2={488} y2={318} />
        <Pointer x1={575} y1={417} x2={547} y2={371} />
      </Annotations>
    </Screen>
  );
}
